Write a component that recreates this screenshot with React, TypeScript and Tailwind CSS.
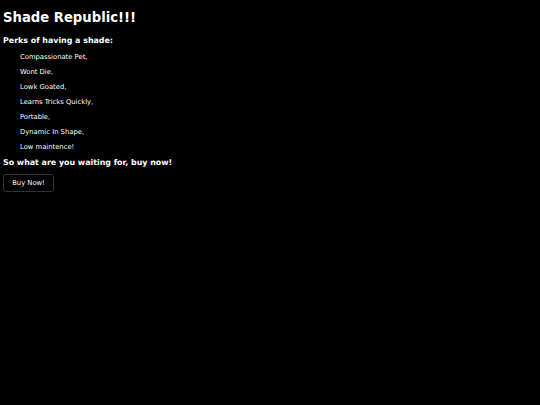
const perks = [
  "Compassionate Pet,",
  "Wont Die,",
  "Lowk Goated,",
  "Learns Tricks Quickly,",
  "Portable,",
  "Dynamic In Shape,",
  "Low maintence!",
];

export default function App() {
  return (
    <div className="min-h-[405px] w-full bg-black pl-[3px] pt-[10px] text-white [font-family:'DejaVu_Sans',Verdana,sans-serif]">
      <h1 className="text-[13.2px] font-bold leading-[16px]">Shade Republic!!!</h1>
      <h3 className="mt-[9.5px] text-[7.9px] font-bold leading-[9px]">Perks of having a shade:</h3>
      <ul className="mt-[5.7px] pl-[17px]">
        {perks.map((perk) => (
          <li key={perk} className="text-[6.8px] leading-[15px]">
            {perk}
          </li>
        ))}
      </ul>
      <h3 className="mt-[2.6px] text-[7.9px] font-bold leading-[9px]">
        So what are you waiting for, buy now!
      </h3>
      <button className="mt-[7.5px] h-[17.5px] w-[51px] rounded-[3px] border border-[#333] bg-black text-[6.8px] leading-none text-white">
        Buy Now!
      </button>
    </div>
  );
}
